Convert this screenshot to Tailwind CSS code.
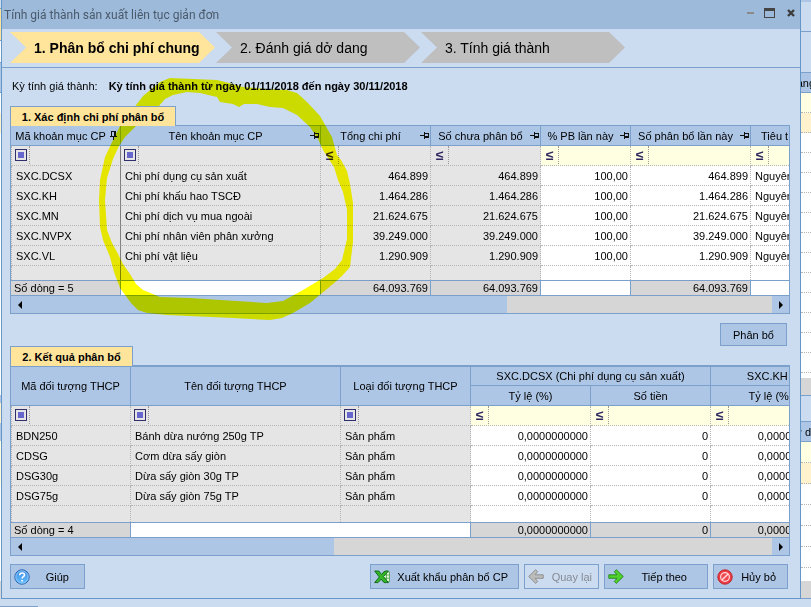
<!DOCTYPE html>
<html lang="vi">
<head>
  <meta charset="UTF-8" />
  <meta name="viewport" content="width=device-width, initial-scale=1.0" />
  <title>Tính giá thành sản xuất liên tục giản đơn</title>
  <script src="https://cdn.jsdelivr.net/npm/@tailwindcss/browser@4"></script>
</head>
<body class="relative bg-[#cbdbf0] overflow-hidden font-['Liberation_Sans',Arial,sans-serif] text-[11px] leading-[14px] text-black">

  <!-- icons -->
  <svg class="hidden">
    <symbol id="pin" viewBox="0 0 9 7"><path d="M0 3h4v1H0zM4 0h1v7H4zM5 1h4v5H5v-2h3V2H5z" fill="#111" /></symbol>
    <symbol id="pin-down" viewBox="0 0 7 9"><path d="M3 9V6h1v3zM0 5h7v1H0zM1 5V0h5v5H4V1H2v4z" fill="#111" /></symbol>
  </svg>

  <div class="flex">
    <!-- edge of the window behind, left -->
    <div class="w-px shrink-0 flex flex-col bg-white">
      <div class="h-2 bg-[#cbdbf0]"></div>
      <div class="h-[32px] bg-[#ffe49c] border-t border-[#7ba0cc]"></div>
      <div class="h-[22px] bg-white border-t border-[#7ba0cc]"></div>
      <div class="h-[31px] bg-[#adc6e6] border-y border-[#7ba0cc]"></div>
      <div class="h-[20px] bg-white"></div>
      <div class="h-[20px] bg-[#fff2cc]"></div>
      <div class="h-[262px] bg-white"></div>
      <div class="h-[8px] bg-[#adc6e6]"></div>
      <div class="h-[20px] bg-[#fff2cc]"></div>
      <div class="h-[18px] bg-[#adc6e6]"></div>
      <div class="h-[44px] bg-[#ffffe1]"></div>
      <div class="grow bg-white"></div>
      <div class="h-[18px] bg-[#d6d6d6]"></div>
    </div>

    <div class="relative grow min-w-0 border-x border-b border-[#6496c8] bg-[#cbdbf0]">
      <header class="h-[29px] flex items-start bg-[#9dbada] pl-[2px] pr-[5px]">
        <h1 class="grow self-center font-['Roboto','Noto_Sans',sans-serif] text-[12px] leading-4 text-[#4b5a6b]">Tính giá thành sản xuất liên tục giản đơn</h1>
        <div class="flex items-center h-[26px] gap-[10px]">
          <button aria-label="Thu nhỏ" class="block"><svg width="7" height="10"><path d="M0 4h7v2H0z" fill="#8a8a8a" /></svg></button>
          <button aria-label="Phóng to" class="block"><svg width="11" height="10"><path d="M0 0h11v10H0zM1 3v6h9V3z" fill="#444" fill-rule="evenodd" /></svg></button>
          <button aria-label="Đóng" class="block pl-[2px]"><svg width="8" height="8"><path d="M1 1l6 6M7 1l-6 6" stroke="#3c3c3c" stroke-width="2.4" /></svg></button>
        </div>
      </header>

      <nav class="h-[39px] flex items-start gap-px pl-2 pt-[3px] border-b border-[#7ba0cc] text-[14px]">
        <a href="#" class="w-[205px] h-[31px] flex items-center pl-6 font-bold bg-[#ffe49c] [clip-path:polygon(0_0,calc(100%_-_16px)_0,100%_50%,calc(100%_-_16px)_100%,0_100%,16px_50%)]">1. Phân bổ chi phí chung</a>
        <a href="#" class="w-[204px] h-[31px] flex items-center pl-6 bg-[#bfbfbf] [clip-path:polygon(0_0,calc(100%_-_16px)_0,100%_50%,calc(100%_-_16px)_100%,0_100%,16px_50%)]">2. Đánh giá dở dang</a>
        <a href="#" class="w-[204px] h-[31px] flex items-center pl-6 bg-[#bfbfbf] [clip-path:polygon(0_0,calc(100%_-_16px)_0,100%_50%,calc(100%_-_16px)_100%,0_100%,16px_50%)]">3. Tính giá thành</a>
      </nav>

      <main class="pl-2 pr-[10px]">
        <div class="h-[38px] flex items-center pl-[2px] pb-[2px] gap-[11px]">
          <span>Kỳ tính giá thành:</span>
          <b>Kỳ tính giá thành từ ngày 01/11/2018 đến ngày 30/11/2018</b>
        </div>

        <section>
          <h2 class="relative z-10 w-[166px] h-5 -mb-px flex items-center justify-center font-bold bg-[#ffe49c] border border-b-0 border-[#7ba0cc]">1. Xác định chi phí phân bổ</h2>
          <div class="border border-[#7ba0cc] bg-[#adc6e6] overflow-hidden">
            <table class="table-fixed w-[860px] border-separate border-spacing-0 whitespace-nowrap">
              <colgroup>
                <col class="w-[110px]" /><col class="w-[200px]" /><col class="w-[110px]" /><col class="w-[110px]" /><col class="w-[90px]" /><col class="w-[120px]" /><col class="w-[120px]" />
              </colgroup>
              <thead id="costHead"></thead>
              <tbody id="costBody"></tbody>
              <tfoot>
                <tr>
                  <td class="h-4 p-0 pl-[3px] bg-[#d6d6d6] border-y border-r border-[#7ba0cc]">Số dòng = 5</td>
                  <td class="h-4 p-0 bg-white border-y border-r border-[#7ba0cc]"></td>
                  <td class="h-4 p-0 pr-[2px] text-right bg-[#d6d6d6] border-y border-r border-[#7ba0cc]">64.093.769</td>
                  <td class="h-4 p-0 pr-[2px] text-right bg-[#d6d6d6] border-y border-r border-[#7ba0cc]">64.093.769</td>
                  <td class="h-4 p-0 bg-white border-y border-r border-[#7ba0cc]"></td>
                  <td class="h-4 p-0 pr-[2px] text-right bg-[#d6d6d6] border-y border-r border-[#7ba0cc]">64.093.769</td>
                  <td class="h-4 p-0 bg-white border-y border-[#7ba0cc]"></td>
                </tr>
              </tfoot>
            </table>
            <div class="h-[17px] flex bg-[#d6d6d6]">
              <button aria-label="Cuộn trái" class="w-[17px] flex items-center justify-center bg-[#adc6e6]"><svg width="4" height="8"><path d="M4 0v8L0 4z" /></svg></button>
              <div class="w-[479px] bg-[#adc6e6]"></div>
              <button aria-label="Cuộn phải" class="ml-auto w-[17px] flex items-center justify-center bg-[#adc6e6]"><svg width="4" height="8"><path d="M0 0v8l4-4z" /></svg></button>
            </div>
          </div>
        </section>

        <div class="flex justify-end pt-[9px] pr-[3px]">
          <button class="w-[67px] h-[23px] bg-[#adc6e6] border border-[#7ba0cc]">Phân bổ</button>
        </div>

        <section>
          <h2 class="relative z-10 w-[123px] h-5 -mb-px flex items-center justify-center font-bold bg-[#ffe49c] border border-b-0 border-[#7ba0cc]">2. Kết quả phân bổ</h2>
          <div class="border border-t-2 border-[#7ba0cc] bg-[#adc6e6] overflow-hidden">
            <table class="table-fixed w-[940px] border-separate border-spacing-0 whitespace-nowrap">
              <colgroup>
                <col class="w-[120px]" /><col class="w-[210px]" /><col class="w-[130px]" /><col class="w-[120px]" /><col class="w-[120px]" /><col class="w-[120px]" /><col class="w-[120px]" />
              </colgroup>
              <thead>
                <tr class="text-center">
                  <th rowspan="2" class="p-0 font-normal border-b border-r border-[#7ba0cc]">Mã đối tượng THCP</th>
                  <th rowspan="2" class="p-0 font-normal border-b border-r border-[#7ba0cc]">Tên đối tượng THCP</th>
                  <th rowspan="2" class="p-0 font-normal border-b border-r border-[#7ba0cc]">Loại đối tượng THCP</th>
                  <th colspan="2" class="h-[19px] p-0 font-normal border-b border-r border-[#7ba0cc]">SXC.DCSX (Chi phí dụng cụ sản xuất)</th>
                  <th colspan="2" class="h-[19px] p-0 font-normal border-b border-r border-[#7ba0cc]">SXC.KH (Chi phí khấu hao TSCĐ)</th>
                </tr>
                <tr class="text-center">
                  <th class="h-5 p-0 font-normal border-b border-r border-[#7ba0cc]">Tỷ lệ (%)</th>
                  <th class="h-5 p-0 font-normal border-b border-r border-[#7ba0cc]">Số tiền</th>
                  <th class="h-5 p-0 font-normal border-b border-r border-[#7ba0cc]">Tỷ lệ (%)</th>
                  <th class="h-5 p-0 font-normal border-b border-r border-[#7ba0cc]">Số tiền</th>
                </tr>
              </thead>
              <tbody id="resultBody"></tbody>
              <tfoot>
                <tr>
                  <td class="h-4 p-0 pl-[3px] bg-[#d6d6d6] border-y border-r border-[#7ba0cc]">Số dòng = 4</td>
                  <td colspan="2" class="h-4 p-0 bg-white border-y border-r border-[#7ba0cc]"></td>
                  <td class="h-4 p-0 pr-[2px] text-right bg-[#d6d6d6] border-y border-r border-[#7ba0cc]">0,0000000000</td>
                  <td class="h-4 p-0 pr-[2px] text-right bg-[#d6d6d6] border-y border-r border-[#7ba0cc]">0</td>
                  <td class="h-4 p-0 pr-[2px] text-right bg-[#d6d6d6] border-y border-r border-[#7ba0cc]">0,0000000000</td>
                  <td class="h-4 p-0 pr-[2px] text-right bg-[#d6d6d6] border-y border-r border-[#7ba0cc]">0</td>
                </tr>
              </tfoot>
            </table>
            <div class="h-[17px] flex bg-[#d6d6d6]">
              <button aria-label="Cuộn trái" class="w-[17px] flex items-center justify-center bg-[#adc6e6]"><svg width="4" height="8"><path d="M4 0v8L0 4z" /></svg></button>
              <div class="w-[306px] bg-[#adc6e6]"></div>
              <button aria-label="Cuộn phải" class="ml-auto w-[17px] flex items-center justify-center bg-[#adc6e6]"><svg width="4" height="8"><path d="M0 0v8l4-4z" /></svg></button>
            </div>
          </div>
        </section>

        <footer class="flex gap-[5px] pt-2 pr-[2px] pb-[9px]">
          <button class="w-[75px] h-[25px] flex items-center pl-[3px] pr-[15px] mr-auto bg-[#adc6e6] border border-[#7ba0cc]">
            <svg width="16" height="16" viewBox="0 0 16 16" class="shrink-0">
              <defs><linearGradient id="help" x2="0" y2="1"><stop stop-color="#3f8fe6" /><stop offset="1" stop-color="#62bdfb" /></linearGradient></defs>
              <circle cx="8" cy="8" r="7.2" fill="url(#help)" stroke="#2a62b0" />
              <circle cx="8" cy="8" r="6.2" fill="none" stroke="#a9d5fb" stroke-width=".7" />
              <path d="M5.7 6.2c0-3 4.800-2.900 4.800-.2 0 1.700-2.400 1.700-2.400 3.500M8.100 11v1.600" fill="none" stroke="#fff" stroke-width="1.600" />
            </svg>
            <span class="grow text-right">Giúp</span>
          </button>
          <button class="w-[149px] h-[25px] flex items-center pl-[3px] pr-[10px] bg-[#adc6e6] border border-[#7ba0cc]">
            <svg width="16" height="16" viewBox="0 0 16 16" class="shrink-0">
              <path d="M9 3h6.500v9.500H9z" fill="#e4f8de" stroke="#3b9a35" stroke-width=".7" />
              <path d="M12.500 3v9.500M9 6h6.500M9 9.200h6.500" stroke="#3b9a35" stroke-width=".7" />
              <path d="M.6 2h4.200l2.800 3.500L11 2h3.400L9.500 7.600l4.900 6H10L7.200 10.200 4 13.600H.6L5.300 8z" fill="#35b52b" stroke="#0c6412" stroke-width=".9" stroke-linejoin="round" />
            </svg>
            <span class="grow text-right">Xuất khẩu phân bổ CP</span>
          </button>
          <button disabled class="w-[75px] h-[25px] flex items-center pl-[3px] pr-[6px] text-[#868b94] border border-[#7ba0cc]">
            <svg width="16" height="16" viewBox="0 0 16 16" class="shrink-0"><path d="M.7 7.500L7.700.7 9.700 2.700 7 5.800H15.200v3.500H7L9.700 12.400 7.700 14.400z" fill="#bcbcbc" stroke="#8a8a8a" stroke-width=".9" stroke-linejoin="round" /></svg>
            <span class="grow text-right">Quay lại</span>
          </button>
          <button class="w-[104px] h-[25px] flex items-center pl-[3px] pr-5 bg-[#adc6e6] border border-[#7ba0cc]">
            <svg width="16" height="16" viewBox="0 0 16 16" class="shrink-0"><path d="M15.300 7.500L8.300.7 6.300 2.700 9 5.800H.8v3.500H9L6.300 12.400 8.300 14.400z" fill="#4fd02c" stroke="#23851c" stroke-width=".9" stroke-linejoin="round" /></svg>
            <span class="grow text-right">Tiếp theo</span>
          </button>
          <button class="w-[75px] h-[25px] flex items-center pl-[3px] pr-[11px] bg-[#adc6e6] border border-[#7ba0cc]">
            <svg width="16" height="16" viewBox="0 0 16 16" class="shrink-0">
              <circle cx="8" cy="8" r="7.200" fill="#ee3a42" stroke="#b92a31" />
              <circle cx="8" cy="8" r="4.400" fill="#ee4a52" stroke="#ffd9da" stroke-width="1.200" />
              <path d="M5 11l6-6" stroke="#ffd9da" stroke-width="1.400" />
            </svg>
            <span class="grow text-right">Hủy bỏ</span>
          </button>
        </footer>
      </main>
    </div>

    <!-- edge of the window behind, right -->
    <div class="w-[10px] shrink-0 flex flex-col overflow-hidden whitespace-nowrap bg-white">
      <div class="h-[2px] bg-[#adc6e6]"></div>
      <div class="h-[30px] border-b border-[#7ba0cc] bg-[#cbdbf0]"></div>
      <div class="h-[41px] border-b border-[#7ba0cc] bg-[#cbdbf0]"></div>
      <div class="h-[20px] border-b border-[#7ba0cc] bg-[#adc6e6] flex items-center justify-end"><span class="-mr-[4px]">ang</span></div>
      <div class="h-[20px] border-b border-dotted border-[#b4b4b4] bg-[#ffffe1]"></div>
      <div class="h-[20px] border-b border-dotted border-[#b4b4b4] bg-[#fff2cc]"></div>
      <div id="backRowsTop"></div>
      <div class="h-[5px] bg-white"></div>
      <div class="h-[18px] border-b border-[#7ba0cc] bg-[#d6d6d6]"></div>
      <div class="h-[26px] border-b border-[#7ba0cc] bg-[#cbdbf0]"></div>
      <div class="h-[20px] border-b border-[#7ba0cc] bg-[#adc6e6] flex items-center justify-end"><span>ở d</span></div>
      <div class="h-[21px] border-b border-dotted border-[#b4b4b4] bg-[#ffffe1]"></div>
      <div class="h-[21px] border-b border-dotted border-[#b4b4b4] bg-[#fff2cc]"></div>
      <div id="backRowsBottom"></div>
      <div class="grow bg-white"></div>
      <div class="h-[18px] border-b border-[#7ba0cc] bg-[#d6d6d6]"></div>
    </div>
  </div>
  <div class="h-2 flex items-end"><div class="w-[38px] h-px bg-[#7ba0cc]"></div></div>

  <!-- marker stroke round the name column -->
  <svg class="absolute left-0 top-0 mix-blend-multiply pointer-events-none" width="360" height="322" viewBox="0 0 360 322">
    <path fill="#ff0" fill-rule="evenodd" d="M170 78L217 80 229 83 243 87 267 89 287 90 297 93 307 102 320 116 328 130 332 137 337 155 341 160 347 171 350 184 353 203 353 242 350 267 342 276 333 284 310 303 293 313 282 318 270 320 233 318 167 315 147 313 138 310 131 303 120 288 114 272 110 257 103 240 100 227 99 200 100 180 105 157 113 140 120 126 133 109 143 96 154 87 160 82Z
      M187 92L173 95 165 99 153 113 140 122 125 137 119 146 113 159 107 178 105 200 107 230 112 243 117 252 123 264 130 274 136 284 143 290 160 297 190 298 267 303 283 301 303 290 323 278 335 269 342 260 347 239 347 210 343 192 338 180 334 167 323 150 318 139 310 127 297 115 283 108 270 107 257 104 244 104 239 107 233 104 220 102 217 97 200 93Z" />
  </svg>

  <script>
    const costHeads = ["Mã khoản mục CP", "Tên khoản mục CP", "Tổng chi phí", "Số chưa phân bổ", "% PB lần này", "Số phân bổ lần này", "Tiêu thức phân bổ"];
    const costs = [
      ["SXC.DCSX", "Chi phí dụng cụ sản xuất", "464.899"],
      ["SXC.KH", "Chi phí khấu hao TSCĐ", "1.464.286"],
      ["SXC.MN", "Chi phí dịch vụ mua ngoài", "21.624.675"],
      ["SXC.NVPX", "Chi phí nhân viên phân xưởng", "39.249.000"],
      ["SXC.VL", "Chi phí vật liệu", "1.290.909"],
    ].map(([code, name, total]) => [code, name, total, total, "100,00", total, "Nguyên vật liệu"]);

    const results = [
      ["BDN250", "Bánh dừa nướng 250g TP"],
      ["CDSG", "Cơm dừa sấy giòn"],
      ["DSG30g", "Dừa sấy giòn 30g TP"],
      ["DSG75g", "Dừa sấy giòn 75g TP"],
    ].map(([code, name]) => [code, name, "Sản phẩm", "0,0000000000", "0", "0,0000000000", "0"]);

    // locked: number of read-only (grey) columns, texts: number of columns filtered by text
    const costGrid = { heads: costHeads, locked: 4, texts: 2, left: [0, 1, 6], frozen: 0, blank: "h-[14px]" };
    const resultGrid = { heads: ["Mã đối tượng THCP", "Tên đối tượng THCP", "Loại đối tượng THCP", "Tỷ lệ (%)", "Số tiền", "Tỷ lệ (%)", "Số tiền"], locked: 3, texts: 3, left: [0, 1, 2], frozen: -1, blank: "h-4" };

    function edge(grid, i) {
      const first = i === 0 ? "border-l border-l-[#b4b4b4] [border-left-style:dotted] " : "";
      return first + (i === grid.frozen ? "border-r border-r-[#808080]" : "border-r border-r-[#b4b4b4] [border-right-style:dotted]");
    }

    function filterRow(grid) {
      return "<tr>" + grid.heads.map((head, i) => `
        <td class="h-5 p-0 border-b border-b-[#b4b4b4] [border-bottom-style:dotted] ${edge(grid, i)} ${i < grid.locked ? "bg-[#e5e5e5]" : "bg-[#ffffe1]"}">
          <div class="flex h-[19px]">
            <button aria-label="Điều kiện lọc ${head}" class="w-[18px] h-[18px] shrink-0 flex items-center border-r border-dotted border-[#999] ${i < grid.texts ? "pl-[3px]" : "pl-[5px]"}">
              ${i < grid.texts
                ? '<span class="size-3 flex items-center justify-center border border-[#2f2f6b]"><span class="size-[6px] bg-[#6666cc]"></span></span>'
                : '<span class="text-[14px] font-bold text-[#2f2860]">≤</span>'}
            </button>
            <input aria-label="Lọc ${head}" class="grow min-w-0 outline-none" />
          </div>
        </td>`).join("") + "</tr>";
    }

    function dataRow(grid, cells) {
      return "<tr>" + cells.map((cell, i) => `
        <td class="h-5 p-0 border-b border-b-[#b4b4b4] [border-bottom-style:dotted] ${edge(grid, i)} ${i < grid.locked ? "bg-[#e5e5e5]" : "bg-white"} ${grid.left.includes(i) ? "pl-1" : "pr-[2px] text-right"}">${cell}</td>`).join("") + "</tr>";
    }

    function blankRow(grid) {
      return "<tr>" + grid.heads.map((_, i) => `<td class="${grid.blank} p-0 ${edge(grid, i)} ${i < grid.locked ? "bg-[#e5e5e5]" : "bg-white"}"></td>`).join("") + "</tr>";
    }

    function renderBody(id, grid, rows) {
      document.getElementById(id).innerHTML = filterRow(grid) + rows.map(r => dataRow(grid, r)).join("") + blankRow(grid);
    }

    document.getElementById("costHead").innerHTML = "<tr>" + costHeads.map((head, i) => `
      <th class="h-5 p-0 font-normal border-b border-r border-[#7ba0cc]">
        <div class="flex items-center pr-px">
          <span class="grow text-center">${head}</span>
          ${i === 0
            ? '<svg width="7" height="9" class="mr-[2px]"><use href="#pin-down" /></svg>'
            : '<svg width="9" height="7"><use href="#pin" /></svg>'}
        </div>
      </th>`).join("") + "</tr>";

    renderBody("costBody", costGrid, costs);
    renderBody("resultBody", resultGrid, results);

    document.getElementById("backRowsTop").innerHTML = '<div class="h-[20px] border-b border-dotted border-[#b4b4b4]"></div>'.repeat(12);
    document.getElementById("backRowsBottom").innerHTML = '<div class="h-[21px] border-b border-dotted border-[#b4b4b4]"></div>'.repeat(4);
  </script>
</body>
</html>
